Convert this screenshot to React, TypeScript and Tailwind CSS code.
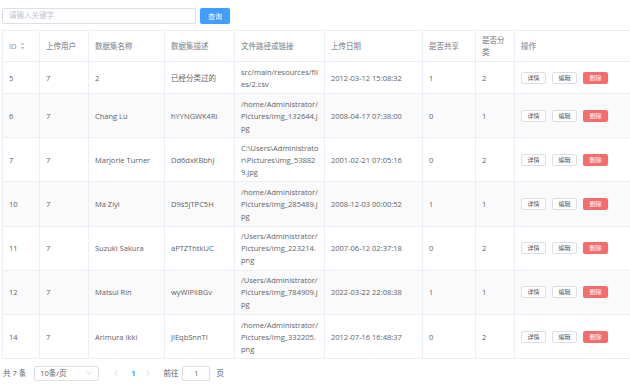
import React from 'react';

type Row = {
  id: string;
  user: string;
  name: string;
  desc: string;
  path: string[];
  date: string;
  shared: string;
  classified: string;
};

const rows: Row[] = [
  { id: '5', user: '7', name: '2', desc: '已经分类过的', path: ['src/main/resources/fil', 'es/2.csv'], date: '2012-03-12 15:08:32', shared: '1', classified: '2' },
  { id: '6', user: '7', name: 'Chang Lu', desc: 'hYYNGWK4Ri', path: ['/home/Administrator/', 'Pictures/img_132644.j', 'pg'], date: '2008-04-17 07:38:00', shared: '0', classified: '1' },
  { id: '7', user: '7', name: 'Marjorie Turner', desc: 'Dd6dxKBbhJ', path: ['C:\\Users\\Administrato', 'r\\Pictures\\img_53882', '9.jpg'], date: '2001-02-21 07:05:16', shared: '0', classified: '2' },
  { id: '10', user: '7', name: 'Ma Ziyi', desc: 'D9s5jTPC5H', path: ['/home/Administrator/', 'Pictures/img_285489.j', 'pg'], date: '2008-12-03 00:00:52', shared: '1', classified: '1' },
  { id: '11', user: '7', name: 'Suzuki Sakura', desc: 'aPTZThtkUC', path: ['/Users/Administrator/', 'Pictures/img_223214.', 'png'], date: '2007-06-12 02:37:18', shared: '0', classified: '2' },
  { id: '12', user: '7', name: 'Matsui Rin', desc: 'wyWlPiIBGv', path: ['/Users/Administrator/', 'Pictures/img_784909.j', 'pg'], date: '2022-03-22 22:08:38', shared: '1', classified: '1' },
  { id: '14', user: '7', name: 'Arimura Ikki', desc: 'JlEqbSnnTI', path: ['/home/Administrator/', 'Pictures/img_332205.', 'png'], date: '2012-07-16 16:48:37', shared: '0', classified: '2' },
];

const cols = 'grid grid-cols-[37px_49px_76px_70px_90px_98px_53px_39px_1fr]';
const cell = 'flex items-center border-r border-[#ebeef5] pl-[6px] leading-[12px]';

const SortCaret = () => (
  <svg width="5" height="8" viewBox="0 0 5 8" className="ml-[3px]">
    <path d="M2.5 0.5 L4.5 3 L0.5 3 Z" fill="#c0c4cc" />
    <path d="M2.5 7.5 L4.5 5 L0.5 5 Z" fill="#c0c4cc" />
  </svg>
);

const SmallButton = ({ label, danger }: { label: string; danger?: boolean }) => (
  <button
    className={
      danger
        ? 'h-[12px] w-[25px] rounded-[2px] bg-[#f56c6c] text-[6px] leading-none text-white'
        : 'h-[12px] w-[25px] rounded-[2px] border border-[#dcdfe6] bg-white text-[6px] leading-none text-[#4a4c50]'
    }
  >
    {label}
  </button>
);

export default function App() {
  return (
    <div
      className="h-[387px] w-[630px] overflow-hidden bg-white text-[7.5px] text-[#606266]"
      style={{ fontFamily: '"Open Sans", "Noto Sans CJK SC", sans-serif' }}
    >
      <div className="flex items-center gap-[4px] pl-[2px] pt-[8px]">
        <div className="flex h-[16px] w-[194px] items-center rounded-[2px] border border-[#dcdfe6] px-[6px] text-[#c0c4cc]">
          请输入关键字
        </div>
        <button className="h-[16px] w-[30px] rounded-[2px] bg-[#409eff] text-[7px] leading-none text-white">查询</button>
      </div>

      <div className="ml-[2px] mt-[6px] w-[640px] border-l border-t border-[#ebeef5]">
        <div className={`${cols} h-[31px] border-b border-[#ebeef5] font-medium text-[#909399]`}>
          <div className={cell}>
            ID
            <SortCaret />
          </div>
          <div className={cell}>上传用户</div>
          <div className={cell}>数据集名称</div>
          <div className={cell}>数据集描述</div>
          <div className={cell}>文件路径或链接</div>
          <div className={cell}>上传日期</div>
          <div className={cell}>是否共享</div>
          <div className={`${cell} pr-[6px]`}>是否分类</div>
          <div className={cell}>操作</div>
        </div>

        {rows.map((r, i) => (
          <div
            key={r.id}
            className={`${cols} border-b border-[#ebeef5] ${i === 0 ? 'h-[32px]' : 'h-[44.2px]'} ${i % 2 === 1 ? 'bg-[#fafafa]' : 'bg-white'}`}
          >
            <div className={cell}>{r.id}</div>
            <div className={cell}>{r.user}</div>
            <div className={cell}>{r.name}</div>
            <div className={cell}>{r.desc}</div>
            <div className={cell}>
              <div className="flex flex-col whitespace-nowrap">
                {r.path.map((line) => (
                  <span key={line}>{line}</span>
                ))}
              </div>
            </div>
            <div className={cell}>{r.date}</div>
            <div className={cell}>{r.shared}</div>
            <div className={cell}>{r.classified}</div>
            <div className={`${cell} gap-[6px]`}>
              <SmallButton label="详情" />
              <SmallButton label="编辑" />
              <SmallButton label="删除" danger />
            </div>
          </div>
        ))}
      </div>

      <div className="mt-[6px] flex h-[16px] items-center pl-[3px]">
        <span>共 7 条</span>
        <div className="ml-[8px] flex h-[15px] w-[65px] items-center justify-between rounded-[2px] border border-[#dcdfe6] pl-[5px] pr-[6px]">
          <span>10条/页</span>
          <svg width="6" height="4" viewBox="0 0 6 4">
            <path d="M0.5 0.8 L3 3.2 L5.5 0.8" stroke="#c0c4cc" strokeWidth="0.7" fill="none" />
          </svg>
        </div>
        <svg width="4" height="6" viewBox="0 0 4 6" className="ml-[15px]">
          <path d="M3.2 0.5 L0.8 3 L3.2 5.5" stroke="#c0c4cc" strokeWidth="0.7" fill="none" />
        </svg>
        <span className="ml-[13px] font-bold text-[#409eff]">1</span>
        <svg width="4" height="6" viewBox="0 0 4 6" className="ml-[11px]">
          <path d="M0.8 0.5 L3.2 3 L0.8 5.5" stroke="#c0c4cc" strokeWidth="0.7" fill="none" />
        </svg>
        <span className="ml-[13px]">前往</span>
        <div className="ml-[4px] flex h-[15px] w-[28px] items-center justify-center rounded-[2px] border border-[#dcdfe6]">
          1
        </div>
        <span className="ml-[6px]">页</span>
      </div>
    </div>
  );
}
